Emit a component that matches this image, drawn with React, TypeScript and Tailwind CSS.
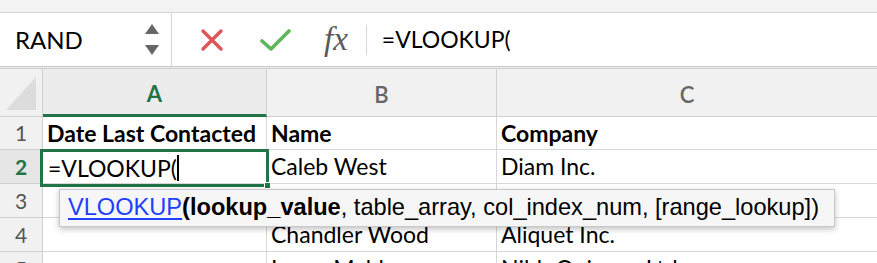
import { Fragment } from "react";

const cellFont = { fontFamily: "Lato, 'Open Sans', sans-serif" };

const rows = [
  { n: "1", a: "Date Last Contacted", b: "Name", c: "Company", bold: true },
  { n: "2", a: "", b: "Caleb West", c: "Diam Inc." },
  { n: "3", a: "", b: "", c: "" },
  { n: "4", a: "", b: "Chandler Wood", c: "Aliquet Inc." },
  { n: "5", a: "", b: "Lucas Mahler", c: "Nibh Quisque Ltd" },
];

function FormulaBar() {
  return (
    <div className="flex h-[54px] items-stretch border-b border-[#c9c9c9] bg-white">
      <div className="flex w-[172px] items-center justify-between border-r border-[#d6d6d6] pl-[15px] pr-[12px]">
        <span className="text-[24px] text-black" style={cellFont}>RAND</span>
        <div className="flex flex-col gap-[11px]">
          <svg width="14" height="10" viewBox="0 0 14 10"><path d="M7 0 L14 10 L0 10 Z" fill="#666" /></svg>
          <svg width="14" height="10" viewBox="0 0 14 10"><path d="M0 0 L14 0 L7 10 Z" fill="#666" /></svg>
        </div>
      </div>
      <div className="flex items-center pl-[28px]">
        <svg width="24" height="24" viewBox="0 0 24 24">
          <path d="M3 3 L21 21 M21 3 L3 21" stroke="#e05555" strokeWidth="3.4" strokeLinecap="round" />
        </svg>
        <svg className="ml-[36px]" width="31" height="24" viewBox="0 0 31 24">
          <path d="M2 13 L11 21 L29 3" stroke="#5fb55a" strokeWidth="3.6" fill="none" strokeLinecap="round" strokeLinejoin="round" />
        </svg>
        <span className="ml-[33px] text-[33px] leading-none italic text-[#5a5a5a]" style={{ fontFamily: "'Liberation Serif', serif" }}>fx</span>
        <div className="ml-[18px] h-[30px] w-px bg-[#d8d8d8]" />
        <span className="ml-[15px] text-[23px] text-black" style={cellFont}>=VLOOKUP(</span>
      </div>
    </div>
  );
}

export default function App() {
  return (
    <div className="relative h-[263px] w-[877px] overflow-hidden bg-white" style={cellFont}>
      <div className="h-[13px] border-b border-[#d4d4d4] bg-[#f3f3f3]" />
      <FormulaBar />
      <div className="h-[2px] border-b border-[#cfcfcf] bg-[#ececec]" />

      <div className="grid grid-cols-[43px_224px_230px_1fr] grid-rows-[48px_33px_34px_34px_34px_34px]">
        {/* header row */}
        <div className="relative border-r border-b border-[#d0d0d0] bg-[#f1f1f1]">
          <svg className="absolute right-[6px] bottom-[6px]" width="30" height="33" viewBox="0 0 30 33">
            <path d="M30 0 L30 33 L0 33 Z" fill="#dcdcdc" />
          </svg>
        </div>
        <div className="flex items-center justify-center border-r border-b-[3px] border-r-[#d0d0d0] border-b-[#227447] bg-[#ececec] pt-[3px] text-[22px] font-bold text-[#227447]">A</div>
        <div className="flex items-center justify-center border-r border-b border-[#d0d0d0] bg-[#f1f1f1] pt-[3px] text-[22px] font-semibold text-[#666]">B</div>
        <div className="flex items-center justify-center border-b border-[#d0d0d0] bg-[#f1f1f1] pt-[3px] text-[22px] font-semibold text-[#666]">C</div>

        {rows.map((r) => (
          <Fragment key={r.n}>
            <div
              className={
                r.n === "2"
                  ? "flex items-center justify-center border-r border-b border-[#d0d0d0] bg-[#e6e6e6] text-[21px] font-bold text-[#227447]"
                  : "flex items-center justify-center border-r border-b border-[#d0d0d0] bg-[#f1f1f1] text-[21px] text-[#555]"
              }
            >
              {r.n}
            </div>
            <div className={"flex items-center overflow-hidden whitespace-nowrap border-r border-b border-[#d6d6d6] pl-[4px] text-[23px] text-black " + (r.bold ? "font-bold" : "")}>{r.a}</div>
            <div className={"flex items-center overflow-hidden whitespace-nowrap border-r border-b border-[#d6d6d6] pl-[4px] text-[23px] text-black " + (r.bold ? "font-bold" : "")}>{r.b}</div>
            <div className={"flex items-center overflow-hidden whitespace-nowrap border-b border-[#d6d6d6] pl-[4px] text-[23px] text-black " + (r.bold ? "font-bold" : "")}>{r.c}</div>
          </Fragment>
        ))}
      </div>

      {/* active cell A2 */}
      <div className="absolute left-[40px] top-[149px] flex h-[38px] w-[229px] items-center border-[3px] border-[#227447] pl-[5px]">
        <span className="text-[23px] text-black">=VLOOKUP(</span>
        <span className="h-[26px] w-[2px] bg-black" />
        <div className="absolute -right-[5px] -bottom-[5px] h-[7px] w-[7px] border border-white bg-[#227447]" />
      </div>

      {/* function tooltip */}
      <div
        className="absolute left-[59px] top-[189px] flex h-[38px] w-[776px] items-center border border-[#c8c8c8] bg-[#f6f6f6] pl-[8px] text-[23.6px] text-black shadow-[0_2px_6px_rgba(0,0,0,0.25)]"
        style={{ fontFamily: "'Liberation Sans', Arial, sans-serif" }}
      >
        <span className="text-[#1f3fff] underline underline-offset-[3px]">VLOOKUP</span>
        <span className="font-bold">(lookup_value</span>
        <span>, table_array, col_index_num, [range_lookup])</span>
      </div>
    </div>
  );
}
